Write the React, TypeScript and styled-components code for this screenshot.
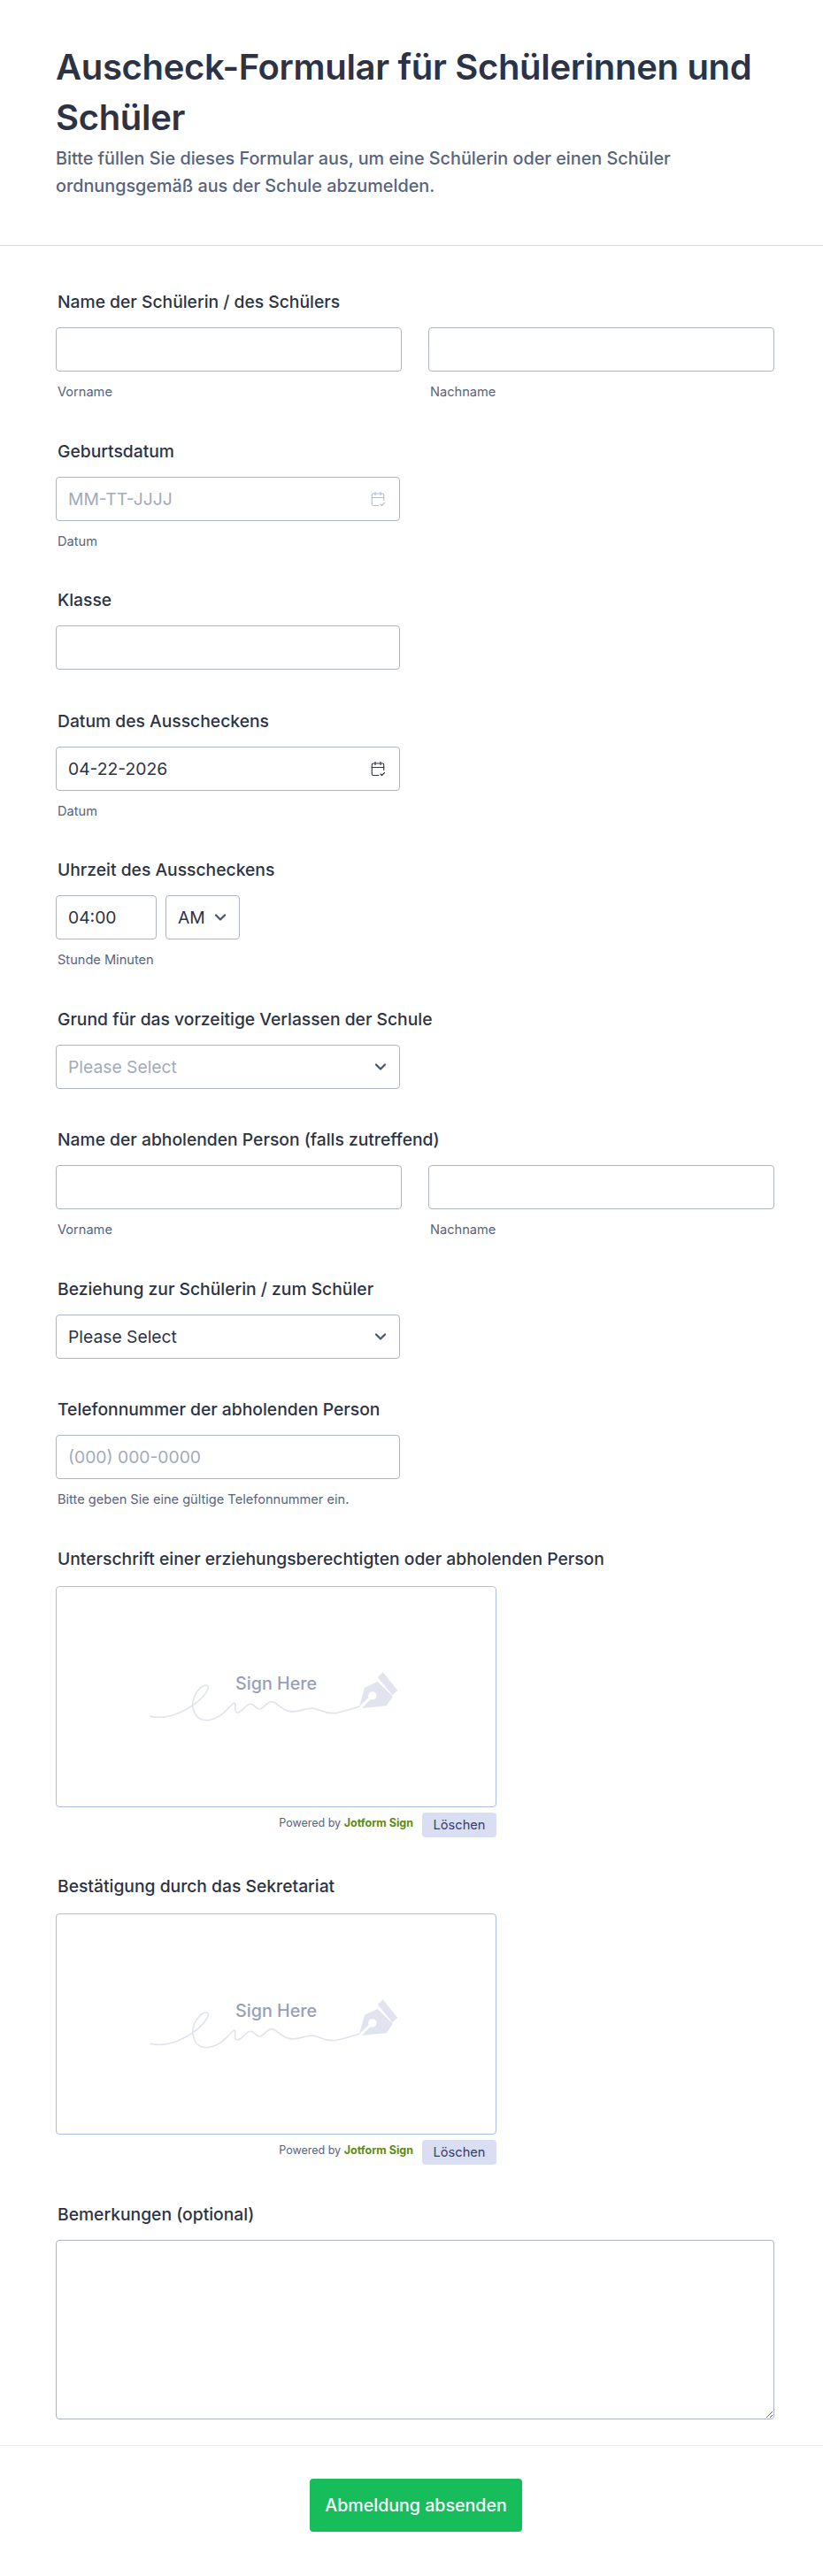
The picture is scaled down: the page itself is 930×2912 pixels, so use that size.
import React from "react";
import styled, { createGlobalStyle } from "styled-components";
import { ChevronDown, CalendarCheck2 } from "lucide-react";

const Global = createGlobalStyle`
  * { box-sizing: border-box; }
  html, body { margin: 0; padding: 0; background: #fff; }
  body { font-family: Inter, "Noto Sans", sans-serif; color: #2c3345; }
`;

const Page = styled.div`
  width: 930px;
  height: 2912px;
  display: flex;
  flex-direction: column;
`;

const Header = styled.header`
  height: 278px;
  padding: 47px 54px 0 63px;
  border-bottom: 1px solid #d8dce9;
`;

const Title = styled.h1`
  margin: 0 0 3px;
  font-size: 40px;
  line-height: 57px;
  font-weight: 600;
  letter-spacing: -0.32px;
  color: #2c3345;
`;

const Subtitle = styled.p`
  margin: 0;
  font-size: 19.8px;
  line-height: 31px;
  font-weight: 500;
  color: #57647e;
`;

const Form = styled.main`
  display: flex;
  flex-direction: column;
  gap: 44.5px;
  padding: 50px 55px 0 63px;
`;

const Field = styled.section`
  display: flex;
  flex-direction: column;
`;

const Label = styled.div`
  height: 24px;
  margin: 1px 0 17px 2px;
  font-size: 19.3px;
  line-height: 24px;
  font-weight: 500;
  color: #2c3345;
  white-space: nowrap;
`;

const Row = styled.div`
  display: flex;
  gap: 30px;
`;

const Column = styled.div`
  display: flex;
  flex-direction: column;
  width: 391px;
`;

const Input = styled.input<{ $w?: number }>`
  display: block;
  width: ${(p) => p.$w ?? 389}px;
  height: 50px;
  padding: 0 13px;
  border: 1px solid #aeb4c6;
  border-radius: 4px;
  background: #fff;
  font: 400 19.3px Inter, sans-serif;
  color: #2c3345;
  outline: none;
  &::placeholder { color: #a2aabb; opacity: 1; }
`;

const Control = styled.div<{ $w?: number; $muted?: boolean }>`
  display: flex;
  align-items: center;
  justify-content: space-between;
  width: ${(p) => p.$w ?? 389}px;
  height: 50px;
  padding: 0 15px 0 13px;
  border: 1px solid #aeb4c6;
  border-radius: 4px;
  background: #fff;
  font-size: 19.3px;
  color: ${(p) => (p.$muted ? "#a2aabb" : "#2c3345")};
`;

const Chevron = styled(ChevronDown)`
  margin-right: -4px;
  flex: none;
`;

const Sub = styled.div`
  height: 17px;
  margin: 15px 0 0 2px;
  font-size: 14.6px;
  line-height: 16px;
  color: #57647e;
  white-space: nowrap;
`;

const TimeRow = styled.div`
  display: flex;
  gap: 10px;
`;

const SigBox = styled.div`
  position: relative;
  width: 498px;
  height: 250px;
  margin-top: 2px;
  padding: 47px 0 0 86px;
  border: 1px solid #a9bfe3;
  border-radius: 4px;
  background: #fff;
`;

const SigArt = styled.svg`
  display: block;
  width: 320px;
  height: 120px;
`;

const SignHere = styled.span`
  position: absolute;
  left: 202px;
  top: 97px;
  font-size: 19.7px;
  line-height: 24px;
  font-weight: 500;
  color: #979fb8;
`;

const SigFoot = styled.div`
  display: flex;
  width: 498px;
  justify-content: flex-end;
  align-items: flex-start;
  gap: 10px;
  margin-top: 6px;
  height: 26px;
`;

const Powered = styled.span`
  font-size: 12.5px;
  line-height: 16px;
  margin-top: 4px;
  color: #57647e;
`;

const Brand = styled.b`
  font-weight: 700;
  color: #5f8a10;
`;

const Clear = styled.button`
  flex: none;
  width: 84px;
  height: 28px;
  padding: 0;
  border: 0;
  border-radius: 4px;
  background: #dadef3;
  font: 400 14.6px Inter, sans-serif;
  color: #343c6a;
`;

const TextArea = styled.textarea`
  display: block;
  width: 812px;
  height: 203px;
  border: 1px solid #aeb4c6;
  border-radius: 4px;
  background: #fff;
  outline: none;
`;

const Footer = styled.footer`
  margin-top: 29px;
  border-top: 1px solid #eaebf2;
  padding: 37px 0 0 10px;
  display: flex;
  justify-content: center;
`;

const Submit = styled.button`
  width: 240px;
  height: 60px;
  padding: 0;
  border: 0;
  border-radius: 4px;
  background: #18bd5b;
  color: #fff;
  font: 500 19.6px Inter, sans-serif;
`;

const Signature = () => (
  <SigBox>
    <SigArt viewBox="0 0 960 360" fill="none">
      <path
        d="M60 298C95 306 135 298 170 280C215 258 250 225 256 200C258 188 240 190 228 202C205 225 195 262 212 290C225 315 260 318 295 296C320 280 335 255 345 252C352 252 340 285 355 285C370 285 385 252 402 256C418 260 418 278 434 272C450 266 458 244 474 248C490 252 500 272 530 280C560 288 585 268 612 270C640 275 650 292 690 286C720 280 745 272 768 264"
        stroke="#e1e4ef"
        strokeWidth="5"
        strokeLinecap="round"
      />
      <path
        fillRule="evenodd"
        d="M768 264L786 200L830 180L882 230L860 262L776 270L806 240A14 14 0 1 0 800 234Z"
        fill="#e1e4ef"
      />
      <path d="M830 165L848 148L898 210L880 226Z" fill="#e1e4ef" />
    </SigArt>
    <SignHere>Sign Here</SignHere>
  </SigBox>
);

const SigFooter = () => (
  <SigFoot>
    <Powered>
      Powered by <Brand>Jotform Sign</Brand>
    </Powered>
    <Clear>Löschen</Clear>
  </SigFoot>
);

const NameRow = () => (
  <Row>
    <Column>
      <Input $w={391} />
      <Sub>Vorname</Sub>
    </Column>
    <Column>
      <Input $w={391} />
      <Sub>Nachname</Sub>
    </Column>
  </Row>
);

const Arrow = () => <Chevron size={20} strokeWidth={2.8} color="#4d5670" />;

export default function App() {
  return (
    <Page>
      <Global />
      <Header>
        <Title>Auscheck-Formular für Schülerinnen und Schüler</Title>
        <Subtitle>
          Bitte füllen Sie dieses Formular aus, um eine Schülerin oder einen Schüler
          ordnungsgemäß aus der Schule abzumelden.
        </Subtitle>
      </Header>
      <Form>
        <Field>
          <Label>Name der Schülerin / des Schülers</Label>
          <NameRow />
        </Field>
        <Field>
          <Label>Geburtsdatum</Label>
          <Control $muted>
            MM-TT-JJJJ
            <CalendarCheck2 size={18} strokeWidth={1.5} color="#b5bccd" />
          </Control>
          <Sub>Datum</Sub>
        </Field>
        <Field>
          <Label>Klasse</Label>
          <Input />
        </Field>
        <Field>
          <Label>Datum des Ausscheckens</Label>
          <Control>
            04-22-2026
            <CalendarCheck2 size={18} strokeWidth={1.5} color="#2c3345" />
          </Control>
          <Sub>Datum</Sub>
        </Field>
        <Field>
          <Label>Uhrzeit des Ausscheckens</Label>
          <TimeRow>
            <Control $w={114}>04:00</Control>
            <Control $w={84}>
              AM
              <Arrow />
            </Control>
          </TimeRow>
          <Sub>Stunde Minuten</Sub>
        </Field>
        <Field>
          <Label>Grund für das vorzeitige Verlassen der Schule</Label>
          <Control $muted>
            Please Select
            <Arrow />
          </Control>
        </Field>
        <Field>
          <Label>Name der abholenden Person (falls zutreffend)</Label>
          <NameRow />
        </Field>
        <Field>
          <Label>Beziehung zur Schülerin / zum Schüler</Label>
          <Control>
            Please Select
            <Arrow />
          </Control>
        </Field>
        <Field>
          <Label>Telefonnummer der abholenden Person</Label>
          <Input placeholder="(000) 000-0000" />
          <Sub>Bitte geben Sie eine gültige Telefonnummer ein.</Sub>
        </Field>
        <Field>
          <Label>Unterschrift einer erziehungsberechtigten oder abholenden Person</Label>
          <Signature />
          <SigFooter />
        </Field>
        <Field>
          <Label>Bestätigung durch das Sekretariat</Label>
          <Signature />
          <SigFooter />
        </Field>
        <Field>
          <Label>Bemerkungen (optional)</Label>
          <TextArea />
        </Field>
      </Form>
      <Footer>
        <Submit>Abmeldung absenden</Submit>
      </Footer>
    </Page>
  );
}
